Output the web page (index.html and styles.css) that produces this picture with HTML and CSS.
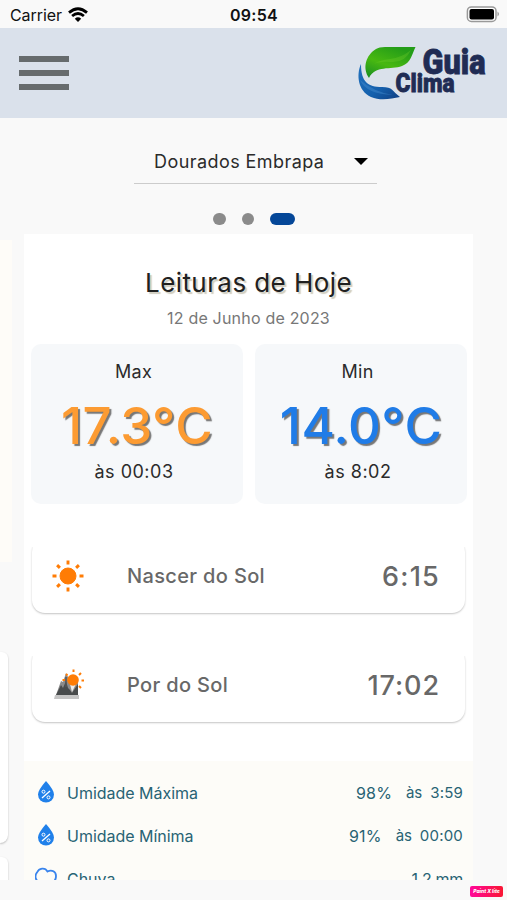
FILE: index.html
```html
<!DOCTYPE html>
<html lang="pt-BR">
<head>
<meta charset="utf-8">
<title>Guia Clima</title>
<link rel="stylesheet" href="styles.css">
</head>
<body>
<div class="status">
  <div class="carrier"><span>Carrier</span>
    <svg width="20" height="16" viewBox="0 0 20 16" fill="none" stroke="#000" stroke-width="2.8"><path d="M1 5.6Q10-2.2 19 5.6M4.1 9Q10 4 15.9 9"/><path d="M6.8 11.7Q10 9 13.2 11.7L10 15z" fill="#000" stroke="none"/></svg>
  </div>
  <span class="clock">09:54</span>
  <svg class="battery" width="34" height="17" viewBox="0 0 34 17"><rect x="1.400" y=".9" width="28.6" height="14.6" rx="4" fill="#fff" stroke="#999" stroke-width="1.500"/><rect x="3.500" y="3" width="24.500" height="10.400" rx="2"/><path d="M31.500 5.500q3 2.500 0 5z" fill="#999"/></svg>
</div>
<header class="topbar">
  <div class="menu"><i></i><i></i><i></i></div>
  <svg class="logo" width="130" height="60" viewBox="358 43 130 60">
    <defs>
      <linearGradient id="leaf" x1="0" y1="1" x2=".6" y2="0"><stop offset="0" stop-color="#168c24"/><stop offset=".5" stop-color="#48b811"/><stop offset="1" stop-color="#249d18"/></linearGradient>
      <linearGradient id="water" x1="0" y1="0" x2="1" y2="1"><stop offset="0" stop-color="#2472bd"/><stop offset=".6" stop-color="#1460ad"/><stop offset="1" stop-color="#103e81"/></linearGradient>
    </defs>
    <path d="M369 78C362 68 366 55 376 49Q379 47 385 47H415.500C412 54 411 63 402 66C391 70 375 65 369 78z" fill="url(#leaf)"/>
    <path d="M370 66Q379 60 390 59T411 50Q405 63 391 62T370 66" fill="#78d22d" opacity=".3"/>
    <path d="M361 64C356 75 358 91 371 97C380 101 391 99 400 97C392 91 393 87 382 87C368 87 361 82 361 64z" fill="url(#water)"/>
    <path d="M360 80Q366 94 393 95Q374 92 360 80" fill="#4b91d2" opacity=".4"/>
    <text class="logo-text" x="422.500" y="73.500" font-size="34.500" textLength="63" lengthAdjust="spacingAndGlyphs">Guia</text>
    <text class="logo-text" x="395.500" y="91.500" font-size="26" textLength="59" lengthAdjust="spacingAndGlyphs">Clima</text>
  </svg>
</header>
<div class="station"><span>Dourados Embrapa</span><i class="caret"></i></div>
<div class="dots"><i></i><i></i><i class="on"></i></div>
<main class="carousel">
  <aside class="previous"><div class="prev-data"></div><div class="prev-card"></div><div class="prev-card next"></div></aside>
  <section class="slide">
    <h1>Leituras de Hoje</h1>
    <p class="date">12 de Junho de 2023</p>
    <div class="temps">
      <div class="temp"><span class="label">Max</span><strong class="max">17.3°C</strong><span class="at">às 00:03</span></div>
      <div class="temp"><span class="label">Min</span><strong class="min">14.0°C</strong><span class="at">às 8:02</span></div>
    </div>
    <div class="sun">
      <svg width="34" height="34" viewBox="-17 -17 34 34" fill="#ff7c05" stroke="#ff7c05"><circle r="8" /><path d="M0-15.500v4M0 11.500v4M-15.500 0h4M11.500 0h4M-10.900-10.900l2.800 2.800M8.100 8.100l2.800 2.800M-10.900 10.900l2.800-2.800M8.100-8.100l2.800-2.800" stroke-width="2.900"/></svg>
      <span>Nascer do Sol</span><b>6:15</b>
    </div>
    <div class="sun">
      <svg width="34" height="34" viewBox="51 667 34 34"><path d="M55 694h24v4H54z" fill="#c4c4c4"/><path d="M56 694L61 680l2 1 3-9 3 6 9 1v15z" fill="#8b8b8b"/><path d="M56 694l5-10 2 3 3-7 2 7 2 2 2 3 6-9v11z" fill="#484b4c"/><path d="M70 683l2 8 4-8z" fill="#eee"/><path d="M66 676v10" stroke="#555" stroke-width="1.500"/><circle cx="73" cy="679" r="5.800" fill="#ff7c05"/><path d="M73.500 668.500v2.500M79 674l2-2M81.500 679.500h2.500M79 685l2 2M66 673l1.500 1.500M62.500 679H65" stroke="#ff7c05" stroke-width="2"/></svg>
      <span>Por do Sol</span><b class="t-set">17:02</b>
    </div>
    <div class="readings">
      <div class="row"><svg width="22" height="22" viewBox="0 0 22 22"><path d="M11 0Q19 9 19 13.500a8 8 0 0 1-16 0Q3 9 11 0z" fill="#2080ea"/><path d="M7 17l8-7" stroke="#fff" stroke-width="1.300"/><circle cx="8.500" cy="10.700" r="1.500" fill="none" stroke="#fff"/><circle cx="13.500" cy="16.400" r="1.500" fill="none" stroke="#fff"/></svg><span class="r-name">Umidade Máxima</span><span class="pct">98%</span><span class="as">às</span><span class="hour">3:59</span></div>
      <div class="row"><svg width="22" height="22" viewBox="0 0 22 22"><path d="M11 0Q19 9 19 13.500a8 8 0 0 1-16 0Q3 9 11 0z" fill="#2080ea"/><path d="M7 17l8-7" stroke="#fff" stroke-width="1.300"/><circle cx="8.500" cy="10.700" r="1.500" fill="none" stroke="#fff"/><circle cx="13.500" cy="16.400" r="1.500" fill="none" stroke="#fff"/></svg><span class="r-name">Umidade Mínima</span><span class="pct">91%</span><span class="as">às</span><span class="hour">00:00</span></div>
      <div class="row"><svg width="22" height="22" viewBox="0 0 22 22" fill="none" stroke="#3984ed" stroke-width="1.800"><path d="M5 15C0 14-.5 8.500 2 5.500C4 1 10 0 12.500 4.500C17 2 21 5 21 9Q21 15 16 15z"/></svg><span class="r-name">Chuva</span><span class="pct rain">1.2 mm</span></div>
    </div>
  </section>
</main>
<footer><span>Paint X lite</span></footer>
</body>
</html>
```

FILE: styles.css
```css
*{box-sizing:border-box}
body{margin:0;width:507px;height:900px;overflow:hidden;background:#f9f9f9;font-family:Inter,sans-serif;color:#2b2b2b}
svg{display:block;flex:none}
.status{height:28px;display:grid;grid-template-columns:1fr 1fr 1fr;align-items:center;padding:1px 7px 0 10px;color:#111}
.carrier{display:flex;align-items:center;gap:6px;font-size:16px;letter-spacing:-.08px}
.clock{justify-self:center;font-size:16px;font-weight:600;letter-spacing:.25px;margin-right:2px}
.battery{justify-self:end}
.topbar{height:90px;background:#dae1eb;display:flex;justify-content:space-between;padding:15px 19px 0}
.menu{width:50px;padding-top:13px;display:flex;flex-direction:column;gap:8px}
.menu i{height:6px;background:#666b6d}
.logo{overflow:visible}
.logo-text{font-family:Roboto,sans-serif;font-weight:900;fill:#202c54;stroke:#202c54;stroke-width:.8px}
.station{width:243px;height:66px;margin:0 auto 0 134px;padding:22px 9px 0 20px;border-bottom:1.500px solid #ccc;display:flex;align-items:center;justify-content:space-between;font-size:18px;letter-spacing:.43px;white-space:nowrap}
.caret{border:7px solid transparent;border-top:7px solid #000;border-bottom:0}
.dots{height:50px;display:flex;align-items:center;gap:16px;padding:20px 0 0 213px}
.dots i{width:12.500px;height:12.500px;border-radius:7px;background:#8b8b8b}
.dots .on{width:25px;background:#054798}
.carousel{height:646px;overflow:hidden;display:flex;gap:12px}
.previous{width:12px;flex:none;padding-top:6px;background:#f9f9f9}
.prev-data{height:322px;background:#fefcf8;margin-bottom:90px}
.prev-card{width:8px;height:191px;background:#fff;border-radius:0 6px 8px 0;box-shadow:0 1px 2px #bbb}
.next{margin-top:14px;height:40px}
.slide{width:449px;flex:none;background:#fff;text-align:center}
h1{height:32px;margin:33px 0 9px;font-size:26px;line-height:32px;font-weight:400;letter-spacing:.42px;color:#202020;text-shadow:2px 2px 1px #d0cdbf}
.date{margin:0;height:20px;font-size:16px;line-height:20px;color:#777;letter-spacing:.2px}
.temps{padding:16px 6px 0 7px;display:grid;grid-template-columns:1fr 1fr;gap:12px}
.temp{height:160px;border-radius:10px;background:#f6f8fa;display:flex;flex-direction:column;align-items:center;padding-top:16px}
.label,.at{font-size:18px;line-height:24px;letter-spacing:.3px;margin-right:7px}
.temp strong{font-size:51px;line-height:58px;font-weight:500;margin:13px 0 5px;letter-spacing:.4px;text-shadow:2px 2px 1px #777;white-space:nowrap}
.max{color:#fc9b32}.min{color:#207ce7}
.at{letter-spacing:.5px;margin-right:6px}
.sun{height:74px;margin:35px 8px 0;padding:0 25px 0 19px;border-radius:13px;box-shadow:0 1px 2px #c4c4c4;display:flex;align-items:center;color:#686868;clip-path:inset(8px -4px -4px)}
.sun span{font-size:20px;font-weight:500;letter-spacing:.35px;margin-left:42px}
.sun b{margin-left:auto;font-size:27px;font-weight:500;letter-spacing:1.2px}
.sun .t-set{letter-spacing:.9px}
.readings{margin-top:39px;height:140px;background:#fdfcf8;padding:9px 10px 0 11px;color:#286374}
.row{height:43px;display:flex;align-items:center;font-size:16px}
.row span{position:relative;top:1px}
.r-name{margin-left:10px;letter-spacing:-.02px}
.pct{margin-left:auto;letter-spacing:.2px}
.rain{letter-spacing:-.3px}
.as{margin-left:14px;font-size:15px;letter-spacing:-.1px}
.hour{margin-left:8px;font-size:15px;letter-spacing:.2px}
footer{display:flex;justify-content:flex-end;padding:6px 4px 0}
footer span{width:33px;height:11px;border-radius:2px;background:linear-gradient(90deg,#ff079a,#fa1733);color:#fff;font:italic 800 5px/11px Inter,sans-serif;text-align:center;white-space:nowrap}
```
